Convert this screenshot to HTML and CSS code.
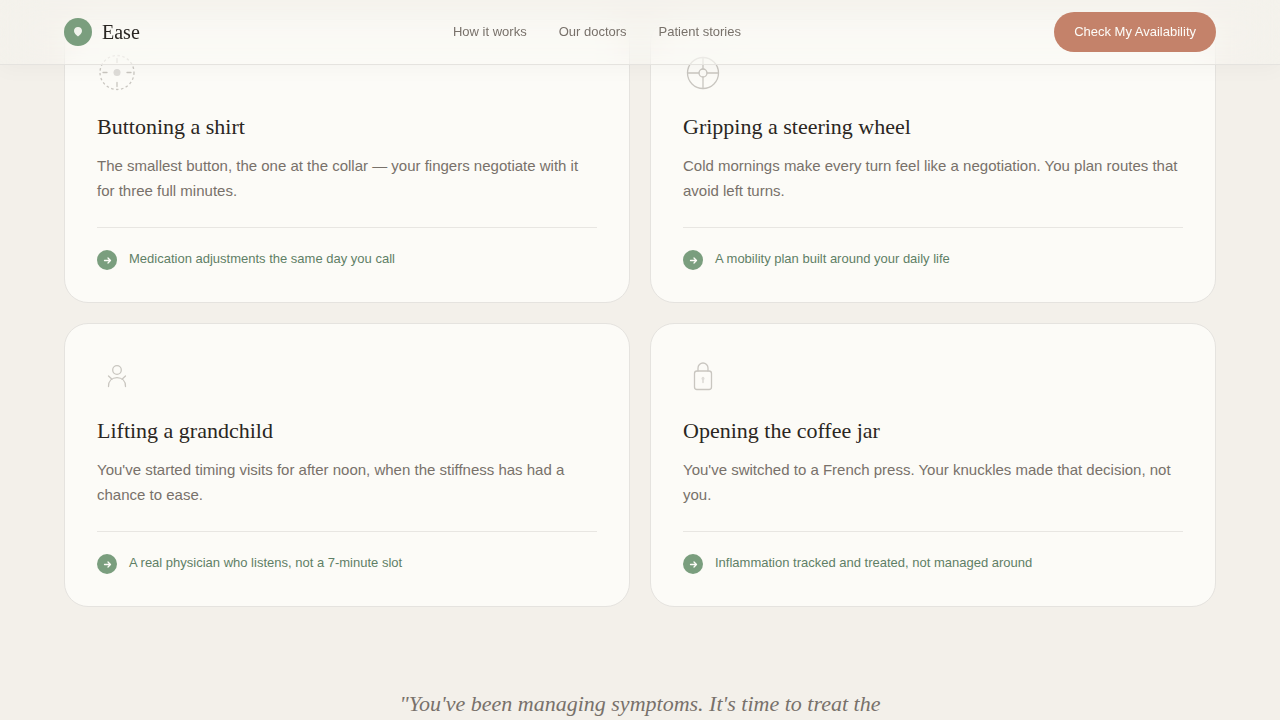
FILE: index.html
```html
<!DOCTYPE html>
<html lang="en">

<head>
    <meta charset="UTF-8">
    <meta name="viewport" content="width=device-width, initial-scale=1.0">
    <title>Ease</title>
    <link rel="stylesheet" href="styles.css">
</head>

<body>

    <header class="site-header">
        <div class="container header-inner">
            <a class="brand" href="#">
                <svg class="brand-mark" viewBox="0 0 28 28" aria-hidden="true">
                    <circle cx="14" cy="14" r="14" fill="#7a9e7e"/>
                    <path d="M14 9c-2.400 0-4 1.700-4 3.900 0 2.200 2 3.800 4 5.600 2-1.800 4-3.400 4-5.600C18 10.700 16.400 9 14 9z" fill="#fdfcf8" opacity="0.9"/>
                </svg>
                Ease
            </a>
            <nav class="site-nav">
                <a href="#how">How it works</a>
                <a href="#doctors">Our doctors</a>
                <a href="#stories">Patient stories</a>
            </nav>
            <button class="cta" type="button">Check My Availability</button>
        </div>
    </header>

    <main>
        <section class="container moments">
            <article class="card">
                <svg class="card-icon" viewBox="0 0 40 40" aria-hidden="true">
                    <circle class="dashed" cx="20" cy="20.500" r="17"/>
                    <circle class="solid" cx="20" cy="20.500" r="3.500"/>
                    <path d="M20 6.500v4M20 30.500v4M6 20.500h4M30 20.500h4"/>
                </svg>
                <h3>Buttoning a shirt</h3>
                <p class="card-text">The smallest button, the one at the collar — your fingers negotiate with it for three full minutes.</p>
                <div class="card-answer">
                    <svg class="arrow" viewBox="0 0 20 20" aria-hidden="true">
                        <circle cx="10" cy="10" r="10"/>
                        <path d="M7.500 10.500h6M11 8l2.500 2.500L11 13"/>
                    </svg>
                    <span>Medication adjustments the same day you call</span>
                </div>
            </article>

            <article class="card">
                <svg class="card-icon" viewBox="0 0 40 40" aria-hidden="true">
                    <circle cx="20" cy="21" r="15.500"/>
                    <circle cx="20" cy="21" r="4"/>
                    <path d="M20 5.500V17M20 25v11.500M4.500 21H16M24 21h11.500"/>
                </svg>
                <h3>Gripping a steering wheel</h3>
                <p class="card-text">Cold mornings make every turn feel like a negotiation. You plan routes that avoid left turns.</p>
                <div class="card-answer">
                    <svg class="arrow" viewBox="0 0 20 20" aria-hidden="true">
                        <circle cx="10" cy="10" r="10"/>
                        <path d="M7.500 10.500h6M11 8l2.500 2.500L11 13"/>
                    </svg>
                    <span>A mobility plan built around your daily life</span>
                </div>
            </article>

            <article class="card">
                <svg class="card-icon" viewBox="0 0 40 40" aria-hidden="true">
                    <circle cx="20" cy="14" r="4.300"/>
                    <path d="M11.500 30.500c0-5.500 3.500-8.800 8.500-8.800s8.500 3.300 8.500 8.800M11.500 20l3.500 3.200M28.500 20l-3.500 3.200"/>
                </svg>
                <h3>Lifting a grandchild</h3>
                <p class="card-text">You've started timing visits for after noon, when the stiffness has had a chance to ease.</p>
                <div class="card-answer">
                    <svg class="arrow" viewBox="0 0 20 20" aria-hidden="true">
                        <circle cx="10" cy="10" r="10"/>
                        <path d="M7.500 10.500h6M11 8l2.500 2.500L11 13"/>
                    </svg>
                    <span>A real physician who listens, not a 7-minute slot</span>
                </div>
            </article>

            <article class="card">
                <svg class="card-icon" viewBox="0 0 40 40" aria-hidden="true">
                    <rect x="11.500" y="15" width="17" height="18.500" rx="2.500"/>
                    <path d="M15 15v-3a5 5 0 0 1 10 0v3"/>
                    <path class="faint" d="M20 21.500v5"/>
                    <circle class="solid" cx="20" cy="22.500" r="1.500"/>
                </svg>
                <h3>Opening the coffee jar</h3>
                <p class="card-text">You've switched to a French press. Your knuckles made that decision, not you.</p>
                <div class="card-answer">
                    <svg class="arrow" viewBox="0 0 20 20" aria-hidden="true">
                        <circle cx="10" cy="10" r="10"/>
                        <path d="M7.500 10.500h6M11 8l2.500 2.500L11 13"/>
                    </svg>
                    <span>Inflammation tracked and treated, not managed around</span>
                </div>
            </article>
        </section>

        <blockquote class="quote">"You've been managing symptoms. It's time to treat the</blockquote>
    </main>

</body>

</html>
```

FILE: styles.css
```css
* {
    box-sizing: border-box;
}

body {
    margin: 0;
    background-color: #f3f0ea;
    color: #2a2622;
    font-family: "Liberation Sans", Arial, sans-serif;
}

a {
    color: inherit;
    text-decoration: none;
}

.container {
    max-width: 1216px;
    margin: 0 auto;
    padding-left: 32px;
    padding-right: 32px;
}

/* Header */
.site-header {
    position: fixed;
    top: 0;
    left: 0;
    right: 0;
    z-index: 10;
    background-color: rgba(250, 248, 243, 0.2);
    backdrop-filter: blur(20px);
    border-bottom: 1px solid #e5e3df;
    box-shadow: 0 4px 20px rgba(42, 38, 34, 0.03);
}

.header-inner {
    display: flex;
    align-items: center;
    justify-content: space-between;
    height: 64px;
}

.brand {
    display: flex;
    align-items: center;
    gap: 10px;
    font-family: "Liberation Serif", "Times New Roman", serif;
    font-size: 20px;
}

.brand-mark {
    width: 28px;
    height: 28px;
}

.site-nav {
    display: flex;
    gap: 32px;
    font-size: 13px;
    line-height: 20px;
    color: #78716a;
}

.cta {
    height: 40px;
    padding: 0 20px 2px;
    border: 0;
    border-radius: 20px;
    background-color: #c4826a;
    color: #fdfcf8;
    font-family: inherit;
    font-size: 13px;
    cursor: pointer;
}

/* Cards */
.moments {
    display: grid;
    grid-template-columns: 1fr 1fr;
    gap: 20px;
    padding-top: 19px;
}

.card {
    padding: 32px;
    background-color: #fcfbf7;
    border: 1px solid #e5e3df;
    border-radius: 24px;
}

.card-icon {
    display: block;
    width: 40px;
    height: 40px;
    fill: none;
    stroke: #c9c6c0;
    stroke-width: 1.3;
    stroke-linecap: round;
}

.card-icon .dashed {
    stroke-dasharray: 2.5 2.5;
    stroke-linecap: butt;
}

.card-icon .faint {
    stroke: #d6d3ce;
}

.card-icon .solid {
    fill: #dedcd8;
    stroke: none;
}

.card h3 {
    margin: 20px 0 12px;
    font-family: "Liberation Serif", "Times New Roman", serif;
    font-size: 22px;
    font-weight: 400;
    line-height: 29px;
}

.card-text {
    margin: 0 0 24px;
    font-size: 15px;
    line-height: 25px;
    color: #78716a;
}

.card-answer {
    display: flex;
    align-items: flex-end;
    gap: 12px;
    padding-top: 20px;
    border-top: 1px solid #e8e6e2;
    font-size: 13px;
    line-height: 22px;
    color: #5f7f66;
}

.arrow {
    flex: none;
    width: 20px;
    height: 20px;
    fill: #7a9e7e;
}

.arrow path {
    fill: none;
    stroke: #fdfcf8;
    stroke-width: 1.3;
    stroke-linecap: round;
    stroke-linejoin: round;
}

/* Quote */
.quote {
    max-width: 560px;
    margin: 80px auto 0;
    text-align: center;
    font-family: "Liberation Serif", "Times New Roman", serif;
    font-size: 22px;
    font-style: italic;
    line-height: 33px;
    color: #78716a;
}
```
